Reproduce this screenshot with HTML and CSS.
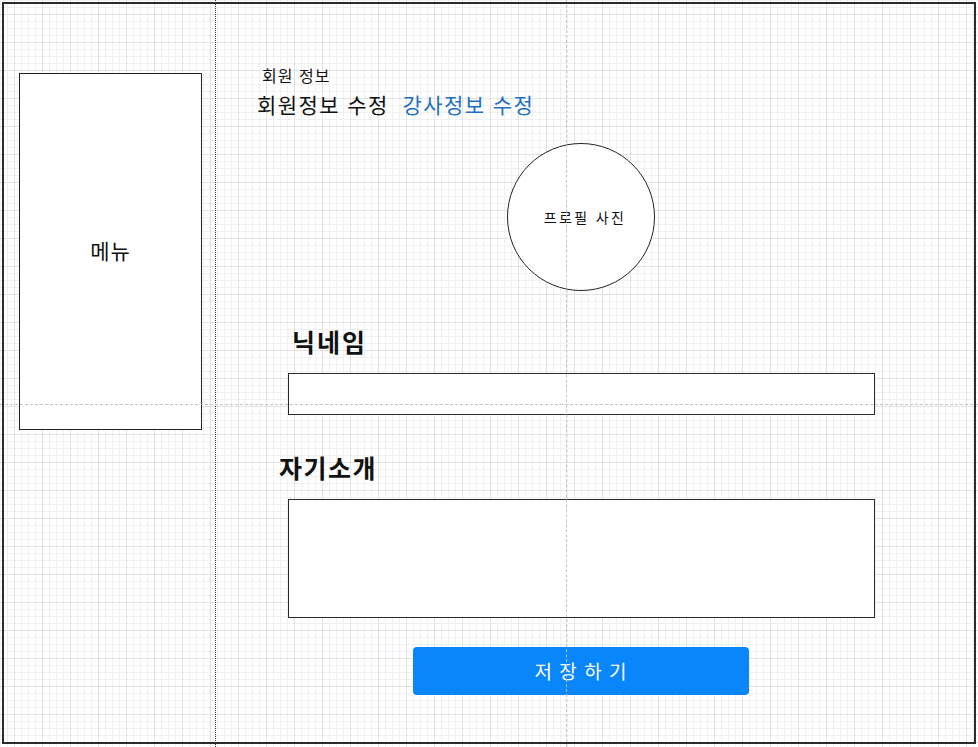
FILE: index.html
```html
<!DOCTYPE html>
<html lang="ko">
<head>
<meta charset="utf-8">
<title>회원 정보</title>
<link rel="stylesheet" href="styles.css">
</head>
<body>
<div class="page">
  <div class="layout">
    <aside class="sidebar">
      <div class="menu">메뉴</div>
    </aside>
    <main class="main">
      <div class="crumb">회원 정보</div>
      <nav class="tabs">
        <span class="tab">회원정보 수정</span>
        <span class="tab tab-link">강사정보 수정</span>
      </nav>
      <div class="avatar">프로필 사진</div>
      <h2 class="label label-nick">닉네임</h2>
      <div class="field field-input"></div>
      <h2 class="label label-intro">자기소개</h2>
      <div class="field field-area"></div>
      <button class="save">저 장 하 기</button>
    </main>
  </div>
  <div class="guide guide-v"></div>
  <div class="guide guide-h"></div>
  <div class="frame"></div>
</div>
</body>
</html>
```
FILE: styles.css
```css
html, body {
  margin: 0;
  padding: 0;
  background: #fff;
}
body {
  font-family: "Noto Sans CJK KR", "Noto Sans", sans-serif;
  color: #111;
}
.page {
  position: relative;
  width: 978px;
  height: 747px;
  overflow: hidden;
  background-color: #fff;
  background-image:
    linear-gradient(to right, #e2e2e2 1px, transparent 1px),
    linear-gradient(to bottom, #e2e2e2 1px, transparent 1px),
    linear-gradient(to right, #f0f0f0 1px, transparent 1px),
    linear-gradient(to bottom, #f0f0f0 1px, transparent 1px);
  background-size: 28px 28px, 28px 28px, 7px 7px, 7px 7px;
  background-position: 14px 14px, 14px 14px, 0 0, 0 0;
}
.layout {
  display: flex;
  height: 100%;
}
.sidebar {
  width: 216px;
  flex: none;
  box-sizing: border-box;
  border-right: 1px dotted #333;
  padding: 73px 0 0 19px;
}
.menu {
  box-sizing: border-box;
  width: 183px;
  height: 357px;
  border: 1.5px solid #222;
  background: #fff;
  display: flex;
  align-items: center;
  justify-content: center;
  font-size: 21px;
  letter-spacing: 1px;
  padding-bottom: 4px;
}
.main {
  flex: 1;
  display: flex;
  flex-direction: column;
  align-items: flex-start;
  padding-top: 65px;
}
.crumb {
  margin-left: 46px;
  font-size: 16px;
  letter-spacing: 1px;
  line-height: 20px;
}
.tabs {
  margin-left: 41px;
  margin-top: 5px;
  display: flex;
  gap: 14px;
  font-size: 21px;
  letter-spacing: 1.4px;
  line-height: 28px;
}
.tab-link {
  color: #1f6fc2;
}
.avatar {
  margin-left: 291px;
  margin-top: 25px;
  box-sizing: border-box;
  width: 148px;
  height: 148px;
  border: 1.5px solid #222;
  border-radius: 50%;
  background: #fff;
  display: flex;
  align-items: center;
  justify-content: center;
  font-size: 14px;
  letter-spacing: 2.4px;
  padding-left: 8px;
}
.label {
  margin: 0;
  font-size: 25px;
  font-weight: 700;
  line-height: 30px;
}
.label-nick {
  margin-left: 76px;
  margin-top: 35px;
  letter-spacing: 2px;
}
.label-intro {
  margin-left: 63px;
  margin-top: 37px;
  letter-spacing: 1.5px;
}
.field {
  box-sizing: border-box;
  width: 587px;
  margin-left: 72px;
  border: 1.5px solid #2a2a2a;
  background: #fff;
}
.field-input {
  height: 42px;
  margin-top: 17px;
}
.field-area {
  height: 119px;
  margin-top: 17px;
}
.save {
  margin-left: 197px;
  margin-top: 29px;
  width: 336px;
  height: 48px;
  border: none;
  border-radius: 4px;
  background: #0a86fb;
  color: #fff;
  font-family: inherit;
  font-size: 19px;
  letter-spacing: 1px;
  padding: 0 0 2px;
}
.guide {
  position: absolute;
  pointer-events: none;
}
.guide-v {
  left: 566px;
  top: 0;
  bottom: 0;
  border-left: 1px dashed #c4c4c4;
}
.guide-h {
  top: 404px;
  left: 0;
  right: 0;
  border-top: 1px dashed #c4c4c4;
}
.frame {
  position: absolute;
  left: 2px;
  top: 2px;
  width: 974px;
  height: 742px;
  box-sizing: border-box;
  border: 2px solid #2b2b2b;
  pointer-events: none;
}
```
